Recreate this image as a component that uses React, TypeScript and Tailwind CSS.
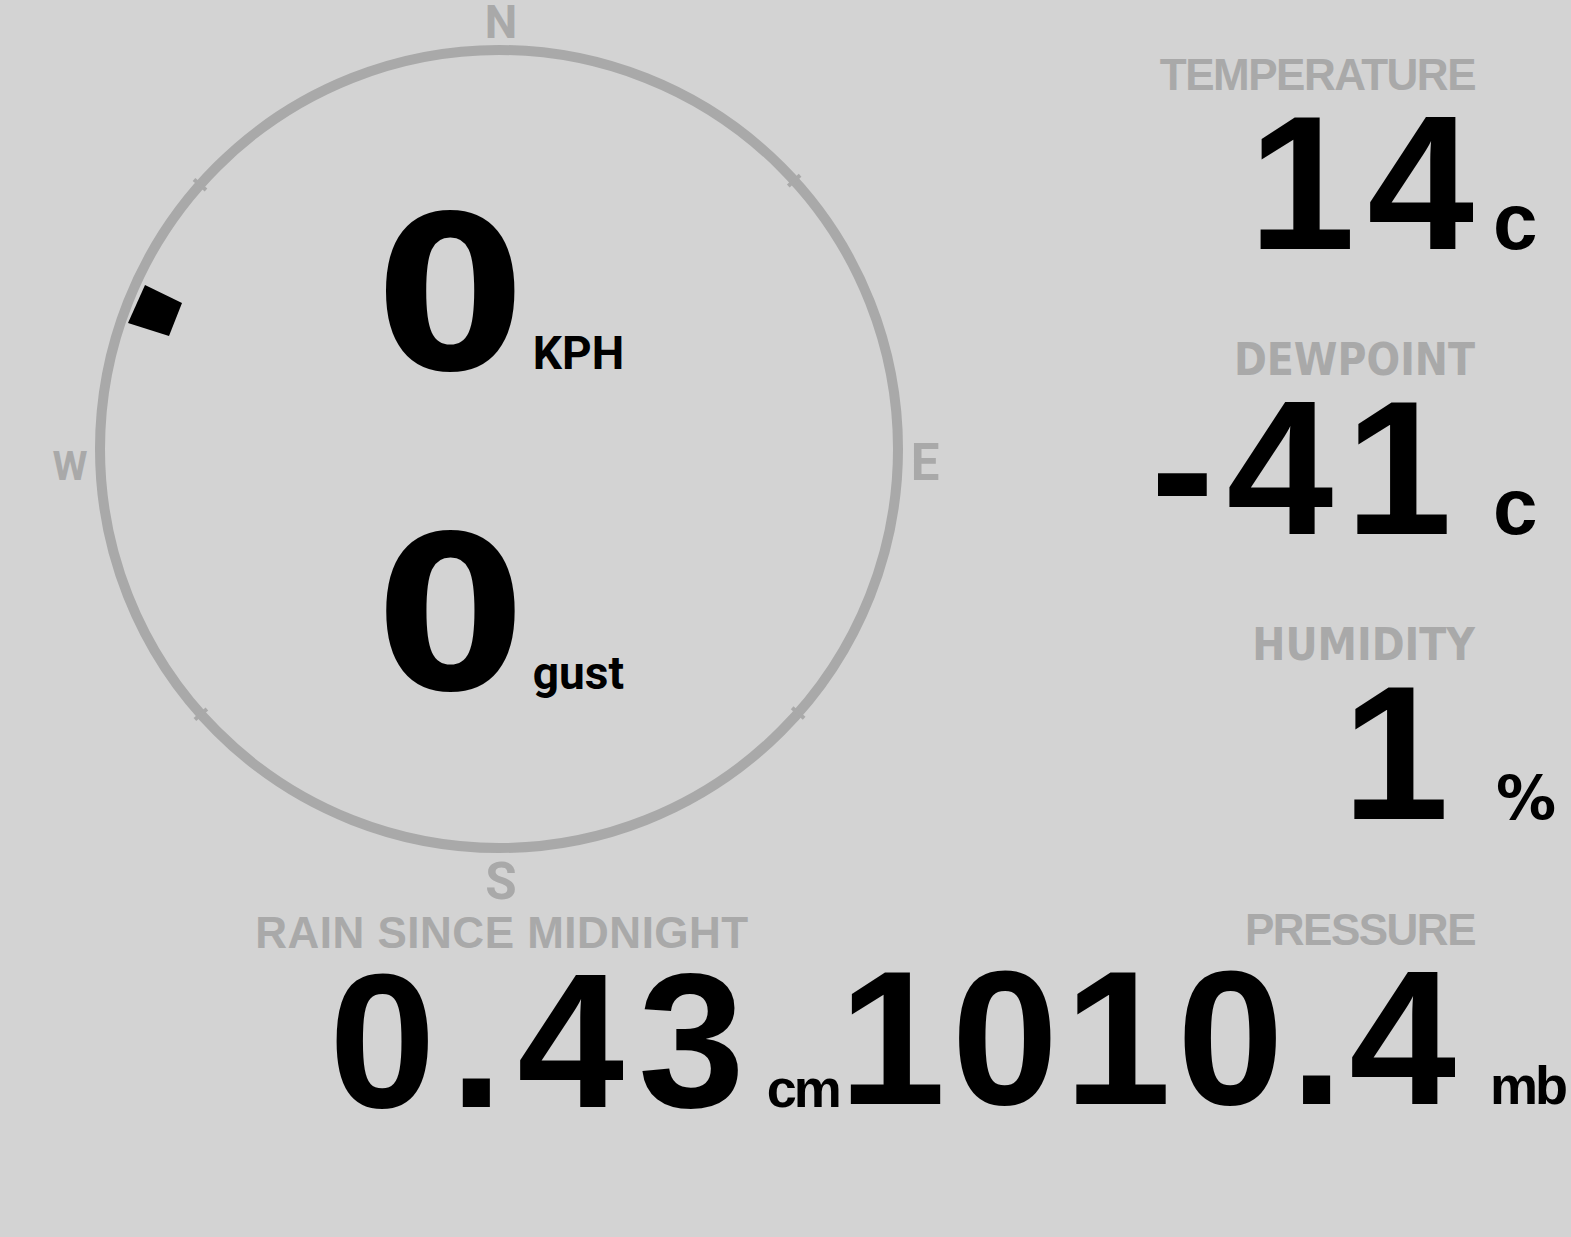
const dinLabel = "font-['Liberation_Sans',Arial,sans-serif] font-bold text-[44px] leading-[46px] text-[#a9a9a9]";
const dejaLabel = "font-['DejaVu_Sans_Condensed','DejaVu_Sans',sans-serif] [font-stretch:condensed] font-bold text-[44px] leading-[46px] text-[#a9a9a9]";
const bigNum = "font-['Liberation_Sans',Arial,sans-serif] font-bold text-[192px] leading-[170px] text-black whitespace-nowrap";

type Reading = {
  label: string;
  labelClass: string;
  value: string;
  valueClass: string;
  unit: string;
  unitClass: string;
};

const readings: Reading[] = [
  {
    label: 'TEMPERATURE',
    labelClass: dinLabel + ' tracking-[-1.5px]',
    value: '14',
    valueClass: 'tracking-[12px] -mr-[12px]',
    unit: 'c',
    unitClass: "w-[97px] pl-[19px] font-['Liberation_Sans',sans-serif] font-bold text-[80px] tracking-[-2px]",
  },
  {
    label: 'DEWPOINT',
    labelClass: dejaLabel,
    value: '-41',
    valueClass: 'tracking-[12px] -mr-[12px] pr-[22px]',
    unit: 'c',
    unitClass: "w-[97px] pl-[19px] font-['Liberation_Sans',sans-serif] font-bold text-[80px] tracking-[-2px]",
  },
  {
    label: 'HUMIDITY',
    labelClass: dejaLabel,
    value: '1',
    valueClass: 'pr-[25px]',
    unit: '%',
    unitClass: "w-[97px] pl-[22px] font-['DejaVu_Sans',sans-serif] font-bold text-[60px]",
  },
  {
    label: 'PRESSURE',
    labelClass: dinLabel + ' tracking-[-1.5px]',
    value: '1010.4',
    valueClass: 'tracking-[6px] -mr-[6px]',
    unit: 'mb',
    unitClass: "w-[115px] pl-[34px] font-['Liberation_Sans',sans-serif] font-bold text-[54px] tracking-[-3px]",
  },
];

function Compass() {
  const cx = 499;
  const cy = 449;
  const r = 399;
  const ticks = [
    [-301, -266],
    [298, -271],
    [-299, 266],
    [298, 263],
  ];
  return (
    <svg className="absolute inset-0 overflow-visible" width="1000" height="910" viewBox="0 0 1000 910">
      <circle cx={cx} cy={cy} r={r} fill="none" stroke="#a9a9a9" strokeWidth="10" />
      {ticks.map(([dx, dy], i) => {
        const len = Math.hypot(dx, dy);
        const ux = dx / len;
        const uy = dy / len;
        return (
          <line
            key={i}
            x1={cx + ux * (r - 8)}
            y1={cy + uy * (r - 8)}
            x2={cx + ux * (r + 8)}
            y2={cy + uy * (r + 8)}
            stroke="#a9a9a9"
            strokeWidth="4"
          />
        );
      })}
      <polygon points="145,285 182,303 169,336 128,323" fill="#000" />
      <g fill="#a9a9a9" fontFamily="Roboto, sans-serif" fontWeight="700" textAnchor="middle">
        <text x="501" y="38" fontSize="46">N</text>
        <text x="925" y="480" fontSize="51">E</text>
        <text x="501" y="899" fontSize="51">S</text>
        <text x="70" y="480" fontSize="40">W</text>
      </g>
    </svg>
  );
}

function Wind({ value, unit }: { value: string; unit: string }) {
  return (
    <div className="flex items-baseline justify-center text-black">
      <span className="font-['DejaVu_Sans',sans-serif] font-bold text-[214px] leading-none">{value}</span>
      <span className="ml-[8px] font-['Roboto',sans-serif] font-bold text-[46px] leading-none">{unit}</span>
    </div>
  );
}

export default function App() {
  return (
    <div className="w-[1571px] h-[1237px] bg-[#d3d3d3] flex overflow-hidden">
      {/* left: compass + rain */}
      <div className="w-[1000px] shrink-0 flex flex-col">
        <div className="relative h-[910px]">
          <Compass />
          <div className="relative flex flex-col pt-[188px] gap-[106px]">
            <Wind value="0" unit="KPH" />
            <Wind value="0" unit="gust" />
          </div>
        </div>
        <div className="flex flex-col">
          <div className={dinLabel + ' text-center pl-[4px] tracking-[0.5px]'}>RAIN SINCE MIDNIGHT</div>
          <div className="flex items-baseline pl-[329px]">
            <span className={bigNum + ' tracking-[14px]'}>0.43</span>
            <span className="pl-[8px] font-['Liberation_Sans',sans-serif] font-bold text-[54px] tracking-[-3px]">cm</span>
          </div>
        </div>
      </div>

      {/* right: readings */}
      <div className="flex-1 min-w-0 flex flex-col pt-[52px]">
        {readings.map((r) => (
          <div key={r.label} className="h-[285px] flex flex-col items-end">
            <div className={r.labelClass + ' mr-[96px] whitespace-nowrap'}>{r.label}</div>
            <div className="flex items-baseline justify-end w-full">
              <span className={bigNum + ' ' + r.valueClass}>{r.value}</span>
              <span className={r.unitClass + ' shrink-0 text-black leading-none'}>{r.unit}</span>
            </div>
          </div>
        ))}
      </div>
    </div>
  );
}
